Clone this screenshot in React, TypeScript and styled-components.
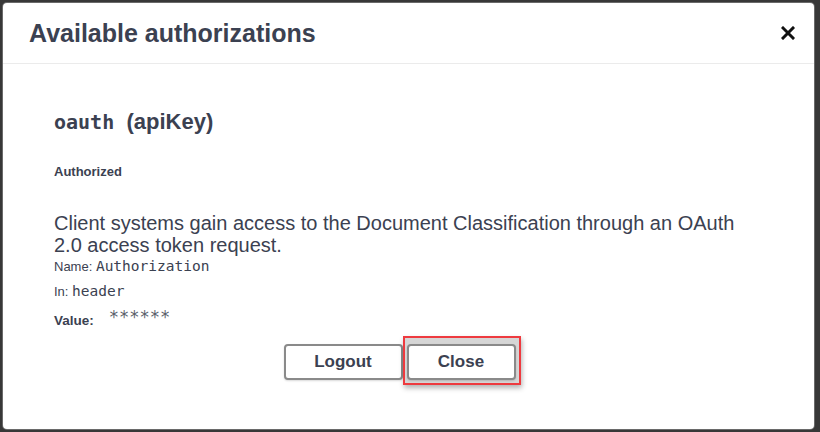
import React from "react";
import styled, { createGlobalStyle } from "styled-components";

const GlobalStyle = createGlobalStyle`
  html, body {
    margin: 0;
    padding: 0;
    height: 432px;
    background: #383838;
    overflow: hidden;
  }
  * {
    box-sizing: border-box;
  }
`;

const Backdrop = styled.div`
  height: 432px;
  padding: 3px 6px 3px 3px;
`;

const Modal = styled.div`
  height: 100%;
  background: #ffffff;
  border-radius: 4px;
  box-shadow: 0 0 0 1px #6a6a6a;
  display: flex;
  flex-direction: column;
  font-family: "Liberation Sans", Arial, sans-serif;
  color: #3b4151;
`;

const Header = styled.div`
  height: 61px;
  display: flex;
  align-items: center;
  justify-content: space-between;
  padding: 0 19px 0 26px;
  border-bottom: 1px solid #ebebeb;
`;

const Title = styled.h3`
  margin: 0;
  font-size: 25px;
  font-weight: 700;
  line-height: 30px;
`;

const CloseIcon = styled.button`
  border: none;
  background: none;
  padding: 0;
  width: 14px;
  height: 14px;
  display: flex;
  cursor: pointer;
`;

const Content = styled.div`
  padding: 46px 51px 0 51px;
`;

const SchemeTitle = styled.h4`
  margin: 0;
  font-size: 22px;
  font-weight: 700;
  line-height: 24px;

  code {
    font-family: "DejaVu Sans Mono", monospace;
    font-size: 20px;
  }
`;

const Status = styled.h6`
  margin: 30px 0 0;
  font-size: 13px;
  font-weight: 700;
  line-height: 16px;
`;

const Description = styled.p`
  margin: 32px 0 0;
  font-size: 20px;
  line-height: 22px;
`;

const Field = styled.div<{ gap: number }>`
  margin-top: ${(p) => p.gap}px;
  font-size: 13px;
  line-height: 18px;

  code {
    font-family: "DejaVu Sans Mono", monospace;
    font-size: 14.5px;
  }
`;

const ValueRow = styled.div`
  margin-top: 9px;
  display: flex;
  align-items: flex-start;
  gap: 15px;
  height: 20px;
`;

const ValueLabel = styled.span`
  font-size: 13.5px;
  font-weight: 700;
  line-height: 22px;
`;

const Masked = styled.code`
  font-family: "DejaVu Sans Mono", monospace;
  font-size: 17px;
  line-height: 14px;
  color: #5a5f6b;
`;

const ButtonRow = styled.div`
  margin-top: 6px;
  display: flex;
  justify-content: center;
  align-items: flex-start;
  padding-right: 13px;
`;

const Button = styled.button`
  height: 36px;
  padding: 0 28px;
  background: #ffffff;
  border: 2px solid #8a8a8a;
  border-radius: 4px;
  box-shadow: 0 1px 2px rgba(0, 0, 0, 0.15);
  font-family: "Liberation Sans", Arial, sans-serif;
  font-size: 17px;
  font-weight: 700;
  color: #3b4151;
  cursor: pointer;
`;

const LogoutButton = styled(Button)`
  margin-top: 8px;
  width: 119px;
`;

const FocusRing = styled.span`
  display: inline-flex;
  padding: 6px 3px 3px 2px;
  border: 2px solid #ee3a3f;
  background: #d6d6d6;
  box-shadow: 1px 3px 5px rgba(0, 0, 0, 0.3);
`;

const DoneButton = styled(Button)`
  width: 109px;
  padding: 0;
`;

export default function App() {
  return (
    <>
      <GlobalStyle />
      <Backdrop>
        <Modal>
          <Header>
            <Title>Available authorizations</Title>
            <CloseIcon aria-label="Close">
              <svg width="14" height="14" viewBox="0 0 14 14">
                <path
                  d="M2 2 L12 12 M12 2 L2 12"
                  stroke="#111"
                  strokeWidth="3"
                  strokeLinecap="square"
                />
              </svg>
            </CloseIcon>
          </Header>
          <Content>
            <SchemeTitle>
              <code>oauth</code>&nbsp; (apiKey)
            </SchemeTitle>
            <Status>Authorized</Status>
            <Description>
              Client systems gain access to the Document Classification through
              an OAuth 2.0 access token request.
            </Description>
            <Field gap={1}>
              Name: <code>Authorization</code>
            </Field>
            <Field gap={6}>
              In: <code>header</code>
            </Field>
            <ValueRow>
              <ValueLabel>Value:</ValueLabel>
              <Masked>******</Masked>
            </ValueRow>
            <ButtonRow>
              <LogoutButton>Logout</LogoutButton>
              <FocusRing>
                <DoneButton>Close</DoneButton>
              </FocusRing>
            </ButtonRow>
          </Content>
        </Modal>
      </Backdrop>
    </>
  );
}
